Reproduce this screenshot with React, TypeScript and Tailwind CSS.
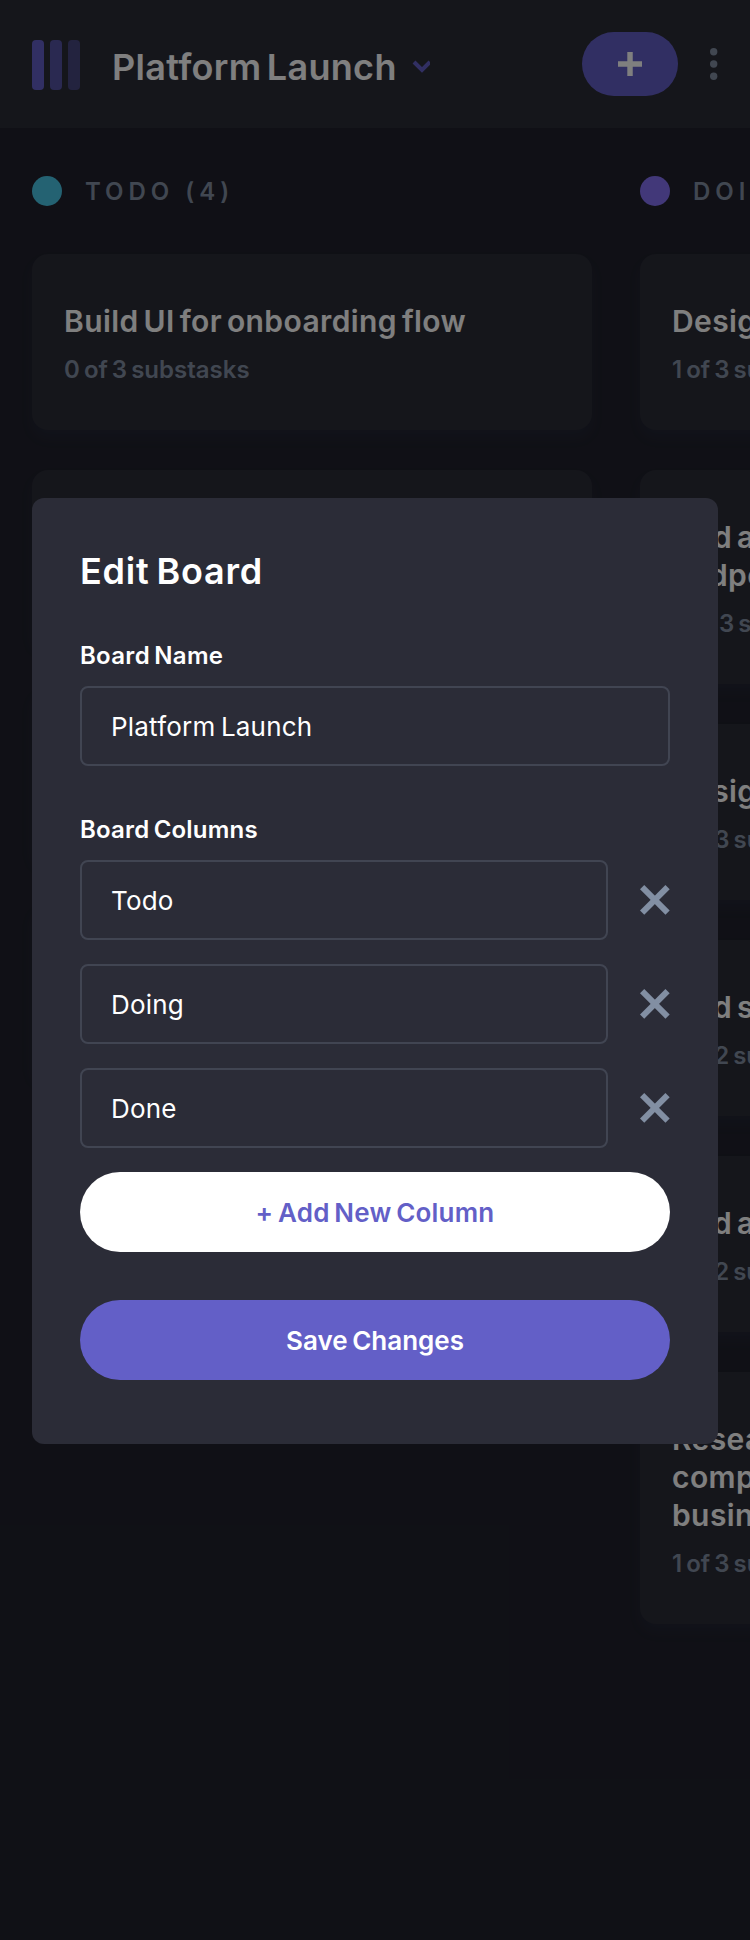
type Task = { lines: string[]; sub: string };
type Column = { name: string; dot: string; tasks: Task[] };

const columns: Column[] = [
  {
    name: "TODO (4)",
    dot: "bg-[#49C4E5]",
    tasks: [
      { lines: ["Build UI for onboarding flow"], sub: "0 of 3 substasks" },
      { lines: ["Build UI for search"], sub: "0 of 1 substasks" },
      { lines: ["Build settings UI"], sub: "1 of 2 substasks" },
      { lines: ["QA and test all major"], sub: "0 of 2 substasks" },
    ],
  },
  {
    name: "DOING (6)",
    dot: "bg-[#8471F2]",
    tasks: [
      { lines: ["Design settings and search pages"], sub: "1 of 3 substasks" },
      { lines: ["Add account management", "endpoints"], sub: "2 of 3 substasks" },
      { lines: ["Design onboarding flow"], sub: "1 of 3 substasks" },
      { lines: ["Add search endpoints"], sub: "1 of 2 substasks" },
      { lines: ["Add authentication endpoints"], sub: "1 of 2 substasks" },
      {
        lines: ["Research pricing points of", "competitors and trial different", "business models"],
        sub: "1 of 3 substasks",
      },
    ],
  },
];

const boardColumns = ["Todo", "Doing", "Done"];

function TaskCard({ task }: { task: Task }) {
  return (
    <article className="rounded-2xl bg-[#2B2C37] px-8 pt-12 pb-[45px] shadow-[0_8px_12px_rgba(54,78,126,0.1)]">
      <h3 className="text-[30px] leading-[38px] font-semibold tracking-[0.4px] [word-spacing:-3px] whitespace-nowrap text-white">
        {task.lines.map((line) => (
          <span key={line} className="block">
            {line}
          </span>
        ))}
      </h3>
      <p className="mt-[15px] text-2xl leading-[30px] font-semibold [word-spacing:-2px] text-[#828FA3]">{task.sub}</p>
    </article>
  );
}

function Header() {
  return (
    <header className="flex h-32 shrink-0 items-center bg-[#2B2C37] pr-8 pl-8">
      <div className="mt-0.5 flex gap-1.5">
        <span className="h-[50px] w-3 rounded bg-[#635FC7]" />
        <span className="h-[50px] w-3 rounded bg-[#635FC7] opacity-75" />
        <span className="h-[50px] w-3 rounded bg-[#635FC7] opacity-50" />
      </div>
      <h1 className="mt-1.5 ml-8 w-[284px] text-4xl leading-[46px] font-semibold tracking-[0.3px] [word-spacing:-4px] whitespace-nowrap text-white">
        Platform Launch
      </h1>
      <svg className="mt-1.5 ml-4 h-3.5 w-[18px]" viewBox="0 0 9 7" fill="none">
        <path d="M1 1l4 4 4-4" stroke="#635FC7" strokeWidth="2" />
      </svg>
      <div className="ml-auto flex items-center gap-8">
        <button className="flex h-16 w-24 items-center justify-center rounded-full bg-[#635FC7]">
          <svg className="h-6 w-6" viewBox="0 0 12 12" fill="#fff">
            <path d="M7.368 12V7.344H12V4.632H7.368V0H4.656v4.632H0v2.712h4.656V12z" />
          </svg>
        </button>
        <svg className="h-8 w-2" viewBox="0 0 4 16" fill="#828FA3">
          <circle cx="1.846" cy="1.846" r="1.846" />
          <circle cx="1.846" cy="8" r="1.846" />
          <circle cx="1.846" cy="14.154" r="1.846" />
        </svg>
      </div>
    </header>
  );
}

function Field({ value }: { value: string }) {
  return (
    <div className="flex h-20 flex-1 items-center rounded-lg border-2 border-[#828FA3]/25 px-[29px] pt-0.5 text-[26px] leading-[46px] tracking-[0.2px] [word-spacing:-2px] text-white">
      {value}
    </div>
  );
}

function EditBoard() {
  return (
    <section className="h-[946px] w-[686px] rounded-xl bg-[#2B2C37] p-12 text-white">
      <h2 className="text-4xl leading-[50px] font-semibold tracking-[0.8px] [word-spacing:-3px]">Edit Board</h2>
      <p className="mt-[45px] text-2xl leading-[30px] font-semibold tracking-[0.3px] [word-spacing:-2px]">Board Name</p>
      <div className="mt-[15px] flex">
        <Field value="Platform Launch" />
      </div>
      <p className="mt-[49px] text-2xl leading-[30px] font-semibold tracking-[0.2px] [word-spacing:-2px]">
        Board Columns
      </p>
      <div className="mt-[15px] flex flex-col gap-6">
        {boardColumns.map((name) => (
          <div key={name} className="flex items-center gap-8">
            <Field value={name} />
            <svg className="h-[30px] w-[30px]" viewBox="0 0 15 15" fill="#828FA3">
              <path d="M12.728 0l2.122 2.122L2.122 14.85 0 12.728z" />
              <path d="M0 2.122L2.122 0 14.85 12.728l-2.122 2.122z" />
            </svg>
          </div>
        ))}
        <button className="h-20 rounded-full bg-white pt-0.5 text-[26px] leading-[46px] font-semibold tracking-[0.2px] [word-spacing:-2px] text-[#635FC7]">
          + Add New Column
        </button>
      </div>
      <button className="mt-12 h-20 w-full rounded-full bg-[#635FC7] pt-0.5 text-[26px] leading-[46px] font-semibold [word-spacing:-2px]">
        Save Changes
      </button>
    </section>
  );
}

export default function App() {
  return (
    <div className="relative h-[1940px] w-[750px] overflow-hidden bg-[#20212C] font-['Inter',sans-serif]">
      <Header />
      <main className="flex gap-12 px-8 pt-12">
        {columns.map((column) => (
          <section key={column.name} className="w-[560px] shrink-0">
            <div className="flex h-[30px] items-center gap-[23px]">
              <span className={`h-[30px] w-[30px] rounded-full ${column.dot}`} />
              <h2 className="pt-0.5 text-2xl leading-[30px] font-semibold tracking-[5px] text-[#828FA3]">
                {column.name}
              </h2>
            </div>
            <div className="mt-12 flex flex-col gap-10">
              {column.tasks.map((task) => (
                <TaskCard key={task.lines[0]} task={task} />
              ))}
            </div>
          </section>
        ))}
      </main>
      <div className="absolute inset-0 flex items-center justify-center bg-black/50 pt-0.5">
        <EditBoard />
      </div>
    </div>
  );
}
